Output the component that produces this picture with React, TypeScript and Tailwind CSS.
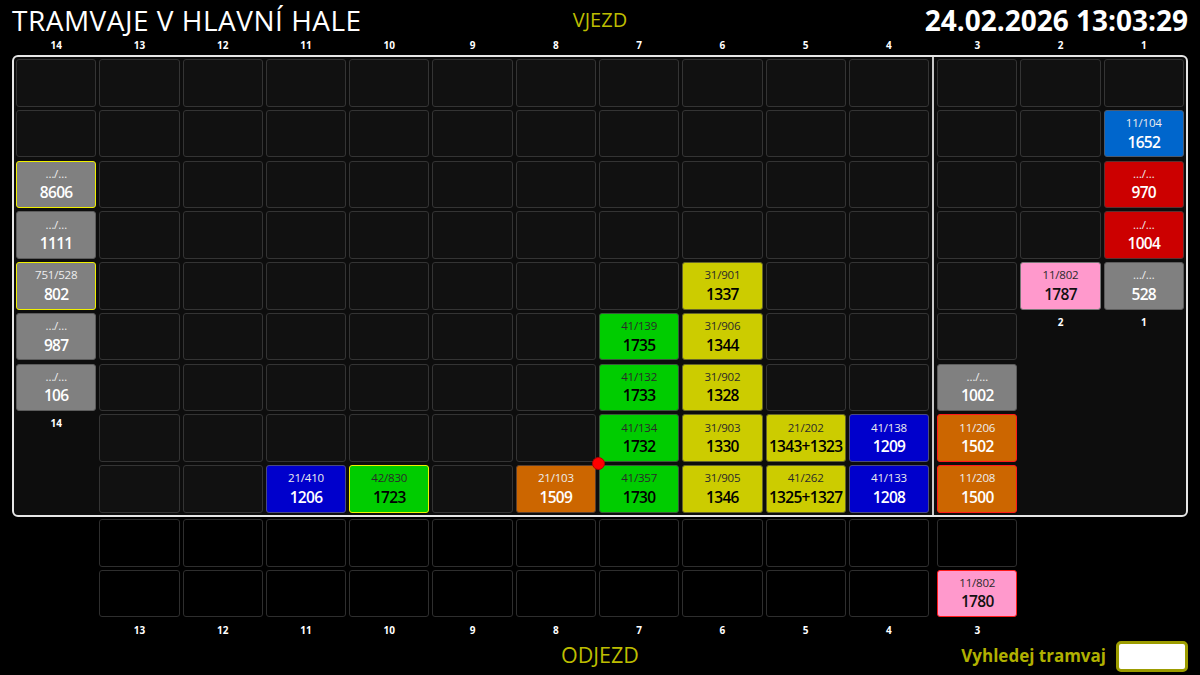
import React from "react";

type Tram = { line: string; num: string; kind: string; edge?: "yellow" | "red" };
type Slot = Tram | null | "empty" | { label: string };

const kinds: Record<string, string> = {
    gray: "bg-[#808080] text-white border-[#5c5c5c]",
    sky: "bg-[#0066cc] text-white border-[#4a5a70]",
    red: "bg-[#cc0000] text-white border-[#5c3030]",
    pink: "bg-[#ff99cc] text-[#111] border-[#777]",
    green: "bg-[#00cc00] text-black border-[#3a5a3a]",
    yellow: "bg-[#cccc00] text-black border-[#66662a]",
    orange: "bg-[#cc6600] text-white border-[#5a4030]",
    blue: "bg-[#0000cc] text-white border-[#4a4a80]",
};

const edges = {
    yellow: "border-[#f0f000]",
    red: "border-[#ff1a1a]",
};

const E = "empty" as const;
const t = (line: string, num: string, kind: string, edge?: "yellow" | "red"): Tram => ({ line, num, kind, edge });
const lbl = (label: string) => ({ label });

// columns from 14 down to 4 (left of the divider), then 3..1
const leftCols: { id: string; inside: Slot[]; outside: boolean }[] = [
    { id: "14", inside: [E, E, t("…/…", "8606", "gray", "yellow"), t("…/…", "1111", "gray"), t("751/528", "802", "gray", "yellow"), t("…/…", "987", "gray"), t("…/…", "106", "gray"), lbl("14")], outside: false },
    { id: "13", inside: [E, E, E, E, E, E, E, E, E], outside: true },
    { id: "12", inside: [E, E, E, E, E, E, E, E, E], outside: true },
    { id: "11", inside: [E, E, E, E, E, E, E, E, t("21/410", "1206", "blue")], outside: true },
    { id: "10", inside: [E, E, E, E, E, E, E, E, t("42/830", "1723", "green", "yellow")], outside: true },
    { id: "9", inside: [E, E, E, E, E, E, E, E, E], outside: true },
    { id: "8", inside: [E, E, E, E, E, E, E, E, t("21/103", "1509", "orange")], outside: true },
    { id: "7", inside: [E, E, E, E, E, t("41/139", "1735", "green"), t("41/132", "1733", "green"), t("41/134", "1732", "green"), t("41/357", "1730", "green")], outside: true },
    { id: "6", inside: [E, E, E, E, t("31/901", "1337", "yellow"), t("31/906", "1344", "yellow"), t("31/902", "1328", "yellow"), t("31/903", "1330", "yellow"), t("31/905", "1346", "yellow")], outside: true },
    { id: "5", inside: [E, E, E, E, E, E, E, t("21/202", "1343+1323", "yellow"), t("41/262", "1325+1327", "yellow")], outside: true },
    { id: "4", inside: [E, E, E, E, E, E, E, t("41/138", "1209", "blue"), t("41/133", "1208", "blue")], outside: true },
];

const rightCols: { id: string; inside: Slot[]; outside: boolean; bottom?: Slot[] }[] = [
    { id: "3", inside: [E, E, E, E, E, E, t("…/…", "1002", "gray"), t("11/206", "1502", "orange", "red"), t("11/208", "1500", "orange", "red")], outside: true, bottom: [E, t("11/802", "1780", "pink", "red")] },
    { id: "2", inside: [E, E, E, E, t("11/802", "1787", "pink"), lbl("2")], outside: false },
    { id: "1", inside: [E, t("11/104", "1652", "sky"), t("…/…", "970", "red"), t("…/…", "1004", "red"), t("…/…", "528", "gray"), lbl("1")], outside: false },
];

function TramCell({ tram, dot }: { tram: Tram; dot?: boolean }) {
    const dark = tram.kind === "green" || tram.kind === "yellow" || tram.kind === "pink";
    return (
        <div
            className={
                "relative h-[47.5px] shrink-0 rounded-[3px] border flex flex-col items-center justify-center leading-none " +
                kinds[tram.kind] + " " + (tram.edge ? edges[tram.edge] : "")
            }
        >
            <span className={"text-[11.5px] tracking-[-0.2px] " + (dark ? "text-[#2a2a2a]" : "text-[#eeeeee]")}>{tram.line}</span>
            <span className="mt-[5px] pt-[1px] text-[15.5px] font-semibold tracking-[-0.7px]">{tram.num}</span>
            {dot ? (
                <span className="absolute left-[-8px] top-[-9px] w-[13px] h-[13px] rounded-full bg-[#ff0000] border border-[#b00000]" />
            ) : null}
        </div>
    );
}

function Slot({ slot, outside, dot }: { slot: Slot; outside?: boolean; dot?: boolean }) {
    if (slot === null) return <div className="h-[47.5px] shrink-0" />;
    if (slot === "empty")
        return (
            <div
                className={
                    "h-[47.5px] shrink-0 rounded-[3px] border " +
                    (outside ? "bg-black border-[#2e2e2e]" : "bg-[#111111] border-[#343434]")
                }
            />
        );
    if ("label" in slot)
        return <div className="pt-[2px] text-center text-[10px] font-bold text-white leading-[14px]">{slot.label}</div>;
    return <TramCell tram={slot} dot={dot} />;
}

function Column({ slots, outside }: { slots: Slot[]; outside?: boolean }) {
    return (
        <div className="flex-1 min-w-0 flex flex-col gap-[3.25px]">
            {slots.map((s, i) => (
                <Slot key={i} slot={s} outside={outside} />
            ))}
        </div>
    );
}

export default function App() {
    const font = { fontFamily: '"Open Sans", "Noto Sans", sans-serif' };
    return (
        <div className="w-[1200px] h-[675px] bg-black text-white overflow-hidden flex flex-col" style={font}>
            {/* header */}
            <div className="h-[36px] px-[12px] grid grid-cols-[1fr_auto_1fr] items-center">
                <div className="text-[28px] font-medium leading-none text-white tracking-[0.5px] pt-[3px]">TRAMVAJE V HLAVNÍ HALE</div>
                <div className="text-[20px] leading-none text-[#bdbd00] pt-[4px]">VJEZD</div>
                <div className="text-right text-[28px] font-bold leading-none pt-[4px]">24.02.2026 13:03:29</div>
            </div>

            {/* column numbers on top */}
            <div className="mx-[12px] px-[4px] h-[19px] flex gap-[3px] items-center">
                {leftCols.map(c => (
                    <div key={c.id} className="flex-1 text-center text-[10px] font-bold">{c.id}</div>
                ))}
                <div className="w-[2px]" />
                {rightCols.map(c => (
                    <div key={c.id} className="flex-1 text-center text-[10px] font-bold">{c.id}</div>
                ))}
            </div>

            {/* hall */}
            <div className="mx-[12px] h-[461.5px] border-2 border-[#e6e6e6] rounded-[6px] bg-[#0d0d0d] p-[2px] flex gap-[3px]">
                {leftCols.map(c =>
                    c.id === "7" ? (
                        <div key={c.id} className="flex-1 min-w-0 flex flex-col gap-[3.25px]">
                            {c.inside.map((s, i) => (
                                <Slot key={i} slot={s} dot={i === 8} />
                            ))}
                        </div>
                    ) : (
                        <Column key={c.id} slots={c.inside} />
                    )
                )}
                <div className="w-[2px] -my-[2px] bg-[#c8c8c8]" />
                {rightCols.map(c => (
                    <Column key={c.id} slots={c.inside} />
                ))}
            </div>

            {/* departure tracks outside the hall */}
            <div className="mx-[12px] px-[4px] mt-[2.5px] flex gap-[3px]">
                {leftCols.map(c => (
                    <div key={c.id} className="flex-1 min-w-0 flex flex-col gap-[3px]">
                        {c.outside ? (
                            <>
                                <Slot slot={E} outside />
                                <Slot slot={E} outside />
                                <div className="pt-[3px] text-center text-[10px] font-bold leading-[14px]">{c.id}</div>
                            </>
                        ) : null}
                    </div>
                ))}
                <div className="w-[2px]" />
                {rightCols.map(c => (
                    <div key={c.id} className="flex-1 min-w-0 flex flex-col gap-[3px]">
                        {c.bottom ? (
                            <>
                                {c.bottom.map((s, i) => (
                                    <Slot key={i} slot={s} outside />
                                ))}
                                <div className="pt-[3px] text-center text-[10px] font-bold leading-[14px]">{c.id}</div>
                            </>
                        ) : null}
                    </div>
                ))}
            </div>

            {/* footer */}
            <div className="flex-1 px-[12px] grid grid-cols-[1fr_auto_1fr] items-center">
                <div />
                <div className="text-[21.5px] leading-none text-[#bdbd00] pb-[2px]">ODJEZD</div>
                <div className="flex items-center justify-end gap-[10px]">
                    <span className="text-[17px] font-bold text-[#b0b000]">Vyhledej tramvaj</span>
                    <input className="w-[72px] h-[31px] bg-white border-[3px] border-[#9c9c00] rounded-[5px] outline-none" />
                </div>
            </div>
        </div>
    );
}
